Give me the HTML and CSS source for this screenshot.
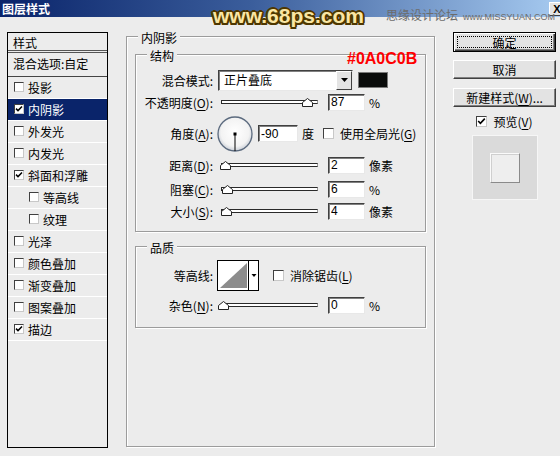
FILE: index.html
```html
<!DOCTYPE html>
<html lang="zh-CN">
<head>
  <meta charset="UTF-8">
  <title>图层样式</title>
  <link rel="stylesheet" href="styles.css">
</head>
<body>
  <div class="titlebar">
    <span class="title">图层样式</span>
    <button class="close">X</button>
  </div>
  <div class="wm-main">www.68ps.com</div>
  <div class="wm-sub"><span class="wm-cn">思缘设计论坛</span><span class="wm-en">www.MISSYUAN.COM</span></div>

  <div class="dialog">
    <!-- left: style list -->
    <div class="style-list">
      <div class="list-head">样式</div>
      <div class="list-blend">混合选项:自定</div>
      <div class="list-item"><span class="cb"></span>投影</div>
      <div class="list-item active"><span class="cb"><svg width="8" height="8" viewBox="0 0 8 8"><path d="M1 3.6 L3 5.6 L7 1.4" fill="none" stroke="#000" stroke-width="1.5"/></svg></span>内阴影</div>
      <div class="list-item"><span class="cb"></span>外发光</div>
      <div class="list-item"><span class="cb"></span>内发光</div>
      <div class="list-item"><span class="cb"><svg width="8" height="8" viewBox="0 0 8 8"><path d="M1 3.6 L3 5.6 L7 1.4" fill="none" stroke="#000" stroke-width="1.5"/></svg></span>斜面和浮雕</div>
      <div class="list-item sub"><span class="cb"></span>等高线</div>
      <div class="list-item sub"><span class="cb"></span>纹理</div>
      <div class="list-item"><span class="cb"></span>光泽</div>
      <div class="list-item"><span class="cb"></span>颜色叠加</div>
      <div class="list-item"><span class="cb"></span>渐变叠加</div>
      <div class="list-item"><span class="cb"></span>图案叠加</div>
      <div class="list-item"><span class="cb"><svg width="8" height="8" viewBox="0 0 8 8"><path d="M1 3.6 L3 5.6 L7 1.4" fill="none" stroke="#000" stroke-width="1.5"/></svg></span>描边</div>
    </div>

    <!-- middle: inner shadow settings -->
    <fieldset class="group main-group">
      <legend>内阴影</legend>

      <fieldset class="group sub-group structure">
        <legend>结构</legend>
        <div class="hex">#0A0C0B</div>
        <div class="rows">
          <div class="row">
            <span class="lbl">混合模式:</span>
            <div class="select">
              <span class="select-value">正片叠底</span>
              <span class="select-btn"><svg width="7" height="4" viewBox="0 0 7 4"><polygon points="0,0 7,0 3.5,4" fill="#000"/></svg></span>
            </div>
            <span class="swatch"></span>
          </div>
          <div class="row">
            <span class="lbl">不透明度(<u>O</u>):</span>
            <div class="slider"><span class="track"></span><svg class="thumb" style="left:81px" width="11" height="9" viewBox="0 0 11 9"><polygon points="0.5,8.5 0.5,4.5 5.5,0.5 10.5,4.5 10.5,8.5" fill="#fff" stroke="#222"/></svg></div>
            <input class="num" value="87">
            <span class="unit">%</span>
          </div>
          <div class="row row-angle">
            <span class="lbl">角度(<u>A</u>):</span>
            <svg class="dial" width="36" height="36" viewBox="0 0 36 36">
              <defs>
                <radialGradient id="dialfill" cx="50%" cy="45%" r="55%">
                  <stop offset="0" stop-color="#ffffff"/>
                  <stop offset="0.75" stop-color="#f3f3f3"/>
                  <stop offset="1" stop-color="#c9ced6"/>
                </radialGradient>
              </defs>
              <circle cx="18" cy="18" r="17" fill="url(#dialfill)" stroke="#5b6a7e" stroke-width="1.3"/>
              <line x1="18" y1="18" x2="18" y2="35" stroke="#000" stroke-width="1"/>
              <rect x="16.5" y="16.5" width="3" height="3" fill="#000"/>
            </svg>
            <input class="num num-angle" value="-90">
            <span class="unit">度</span>
            <span class="cb cb-lg global-cb"></span>
            <span class="cb-text">使用全局光(<u>G</u>)</span>
          </div>
          <div class="row">
            <span class="lbl">距离(<u>D</u>):</span>
            <div class="slider"><span class="track"></span><svg class="thumb" style="left:-1px" width="11" height="9" viewBox="0 0 11 9"><polygon points="0.5,8.5 0.5,4.5 5.5,0.5 10.5,4.5 10.5,8.5" fill="#fff" stroke="#222"/></svg></div>
            <input class="num" value="2">
            <span class="unit">像素</span>
          </div>
          <div class="row row-choke">
            <span class="lbl">阻塞(<u>C</u>):</span>
            <div class="slider"><span class="track"></span><svg class="thumb" style="left:1px" width="11" height="9" viewBox="0 0 11 9"><polygon points="0.5,8.5 0.5,4.5 5.5,0.5 10.5,4.5 10.5,8.5" fill="#fff" stroke="#222"/></svg></div>
            <input class="num" value="6">
            <span class="unit">%</span>
          </div>
          <div class="row">
            <span class="lbl">大小(<u>S</u>):</span>
            <div class="slider"><span class="track"></span><svg class="thumb" style="left:0px" width="11" height="9" viewBox="0 0 11 9"><polygon points="0.5,8.5 0.5,4.5 5.5,0.5 10.5,4.5 10.5,8.5" fill="#fff" stroke="#222"/></svg></div>
            <input class="num" value="4">
            <span class="unit">像素</span>
          </div>
        </div>
      </fieldset>

      <fieldset class="group sub-group quality">
        <legend>品质</legend>
        <div class="rows">
          <div class="row row-contour">
            <span class="lbl">等高线:</span>
            <svg class="contour" width="42" height="31" viewBox="0 0 42 31">
              <rect x="0.5" y="0.5" width="41" height="30" fill="#fff" stroke="#000"/>
              <polygon points="3,28 30,3 30,28" fill="#8c8c8c"/>
              <line x1="31.5" y1="1" x2="31.5" y2="30" stroke="#000"/>
              <polygon points="34.5,14 39.5,14 37,17" fill="#000"/>
            </svg>
            <span class="cb cb-lg aa-cb"></span>
            <span class="cb-text">消除锯齿(<u>L</u>)</span>
          </div>
          <div class="row row-noise">
            <span class="lbl">杂色(<u>N</u>):</span>
            <div class="slider"><span class="track"></span><svg class="thumb" style="left:-3px" width="11" height="9" viewBox="0 0 11 9"><polygon points="0.5,8.5 0.5,4.5 5.5,0.5 10.5,4.5 10.5,8.5" fill="#fff" stroke="#222"/></svg></div>
            <input class="num" value="0">
            <span class="unit">%</span>
          </div>
        </div>
      </fieldset>
    </fieldset>

    <!-- right: buttons and preview -->
    <div class="side">
      <button class="btn btn-default">确定</button>
      <button class="btn btn-cancel">取消</button>
      <button class="btn btn-new">新建样式(<u>W</u>)...</button>
      <div class="preview-check">
        <span class="cb cb-lg"><svg width="9" height="9" viewBox="0 0 9 9"><path d="M1.2 4 L3.4 6.3 L7.8 1.6" fill="none" stroke="#000" stroke-width="1.6"/></svg></span>
        <span class="cb-text">预览(<u>V</u>)</span>
      </div>
      <div class="preview">
        <div class="preview-swatch"></div>
      </div>
    </div>
  </div>
</body>
</html>
```

FILE: styles.css
```css
* {
  box-sizing: border-box;
}

body {
  margin: 0;
  width: 560px;
  height: 456px;
  overflow: hidden;
  position: relative;
  background: #ececec;
  font-family: "Noto Sans CJK SC", "Noto Sans", sans-serif;
  font-size: 12px;
  color: #000;
}

u {
  text-decoration-thickness: 1px;
  text-underline-offset: 2px;
}

/* title bar */
.titlebar {
  height: 17px;
  display: flex;
  align-items: center;
  padding-left: 2px;
  background: linear-gradient(to right, #0a246a, #3b5e9c 45%, #a6caf0);
}

.title {
  flex: 1;
  color: #fff;
  font-weight: bold;
  line-height: 17px;
}

.close {
  width: 16px;
  height: 14px;
  margin-right: -5px;
  padding: 0;
  background: #e4e4e4;
  border: 1px solid;
  border-color: #fff #404040 #404040 #fff;
  font: bold 11px "Liberation Sans", sans-serif;
  line-height: 12px;
  color: #000;
}

/* watermark */
.wm-main {
  position: absolute;
  left: 213px;
  top: 4px;
  font: bold 21px/24px "Liberation Sans", sans-serif;
  color: #fae6a4;
  text-shadow:
    -2px 0 0 #4e3700, 2px 0 0 #4e3700, 0 -2px 0 #4e3700, 0 2px 0 #4e3700,
    -1.5px -1.5px 0 #4e3700, 1.5px -1.5px 0 #4e3700, -1.5px 1.5px 0 #4e3700, 1.5px 1.5px 0 #4e3700;
}

.wm-sub {
  position: absolute;
  left: 386px;
  top: 8px;
  display: flex;
  align-items: baseline;
  gap: 5px;
  color: #6c6c6c;
  line-height: 13px;
}

.wm-cn {
  font-size: 12px;
}

.wm-en {
  font: 9px "Liberation Sans", sans-serif;
}

/* dialog body */
.dialog {
  display: flex;
  align-items: flex-start;
  padding: 15px 0 0 7px;
}

.style-list {
  flex: none;
  width: 101px;
  height: 416px;
  border: 1px solid #000;
}

.list-head {
  height: 20px;
  line-height: 20px;
  padding-left: 5px;
  border-bottom: 3px double #555;
}

.list-blend {
  height: 24px;
  line-height: 22px;
  padding-left: 5px;
  border-bottom: 1px solid #444;
}

.list-item {
  height: 22px;
  display: flex;
  align-items: center;
  gap: 4px;
  padding-left: 6px;
  padding-bottom: 1px;
  border-bottom: 1px solid #fff;
}

.list-item.sub {
  padding-left: 21px;
}

.list-item.active {
  background: #0a246a;
  color: #fff;
}

/* checkboxes */
.cb {
  flex: none;
  width: 10px;
  height: 10px;
  display: flex;
  align-items: center;
  justify-content: center;
  background: #fff;
  border: 1px solid;
  border-color: #404040 #c8c8c8 #c8c8c8 #404040;
}

.cb-lg {
  width: 11px;
  height: 11px;
}

.cb-text {
  margin-left: 6px;
}

/* group boxes */
.group {
  margin: 0;
  min-width: 0;
  border: 1px solid #9c9c9c;
  box-shadow: inset 1px 1px 0 #fff, 1px 1px 0 #fff;
}

.group legend {
  padding: 3px 3px 0;
  line-height: 14px;
  background: #ececec;
}

.main-group {
  flex: none;
  width: 309px;
  height: 419px;
  margin: -4px 0 0 18px;
  padding: 0 8px;
}

.main-group > legend {
  margin-left: 3px;
}

.sub-group {
  position: relative;
  padding: 0;
}

.sub-group > legend {
  margin-left: 11px;
}

.structure {
  margin-top: 1px;
}

.structure .rows {
  padding: 6px 0 9px;
}

.quality {
  margin-top: 6px;
}

.quality .rows {
  padding: 5px 0 11px;
}

.hex {
  position: absolute;
  left: 211px;
  top: -12px;
  font: bold 16px/16px "Liberation Sans", sans-serif;
  color: #ff0000;
}

.row {
  height: 22px;
  display: flex;
  align-items: center;
}

.row-angle {
  height: 41px;
}

.row-choke {
  margin-top: 2px;
}

.row-contour {
  height: 31px;
}

.row-noise {
  margin-top: 3px;
}

.lbl {
  flex: none;
  width: 77px;
  text-align: right;
}

/* dropdown */
.select {
  width: 135px;
  height: 21px;
  margin-left: 5px;
  display: flex;
  align-items: stretch;
  background: #fff;
  border: 1px solid;
  border-color: #404040 #e8e8e8 #e8e8e8 #404040;
  box-shadow: inset 1px 1px 0 #808080;
}

.select-value {
  flex: 1;
  padding-left: 5px;
  line-height: 18px;
}

.select-btn {
  width: 16px;
  display: flex;
  align-items: center;
  justify-content: center;
  background: #e4e4e4;
  border: 1px solid;
  border-color: #fff #404040 #404040 #fff;
}

.swatch {
  width: 30px;
  height: 16px;
  margin-left: 5px;
  background: #0a0c0b;
  border: 1px solid #7a7a7a;
}

/* sliders */
.slider {
  position: relative;
  width: 97px;
  height: 9px;
  margin-left: 8px;
  display: flex;
  align-items: center;
}

.track {
  width: 100%;
  height: 4px;
  background: #fff;
  border: 1px solid #2a2a2a;
  border-right-color: #9a9a9a;
}

.thumb {
  position: absolute;
  top: 0;
}

/* number fields */
.num {
  width: 37px;
  height: 17px;
  margin: 0 0 0 10px;
  padding: 0 2px;
  font: 12px "Liberation Sans", sans-serif;
  background: #fff;
  border: 1px solid;
  border-color: #404040 #e8e8e8 #e8e8e8 #404040;
  box-shadow: inset 1px 1px 0 #808080;
  outline: none;
}

.unit {
  margin-left: 4px;
}

.dial {
  flex: none;
  align-self: flex-end;
  margin: 0 0 2px 4px;
}

.num-angle {
  width: 40px;
  margin-left: 5px;
}

.global-cb {
  margin-left: 9px;
}

.contour {
  flex: none;
  margin-left: 4px;
}

.aa-cb {
  margin-left: 14px;
}

/* right column */
.side {
  flex: none;
  width: 103px;
  margin-left: 18px;
  display: flex;
  flex-direction: column;
  align-items: center;
}

.btn {
  display: block;
  width: 103px;
  height: 19px;
  padding: 0;
  font: 12px/15px "Noto Sans CJK SC", sans-serif;
  color: #000;
  background: #e3e3e3;
  border: 1px solid;
  border-color: #fff #404040 #404040 #fff;
  box-shadow: inset -1px -1px 0 #808080;
}

.btn-default {
  height: 20px;
  border: 1px solid #000;
  box-shadow: inset 1px 1px 0 #fff, inset -1px -1px 0 #404040, inset -2px -2px 0 #808080;
  outline: 1px dotted #000;
  outline-offset: -5px;
}

.btn-cancel {
  margin-top: 8px;
}

.btn-new {
  margin-top: 9px;
}

.preview-check {
  margin-top: 8px;
  height: 12px;
  display: flex;
  align-items: center;
}

.preview {
  width: 66px;
  height: 65px;
  margin-top: 8px;
  display: flex;
  align-items: center;
  justify-content: center;
  background: #dadada;
  border: 1px solid #f6f6f6;
}

.preview-swatch {
  width: 30px;
  height: 30px;
  background: #eeeeee;
  border: 1px solid;
  border-color: #fafafa #8a8a8a #8a8a8a #fafafa;
  box-shadow: inset 1px 1px 0 #cfcfcf;
}
```
